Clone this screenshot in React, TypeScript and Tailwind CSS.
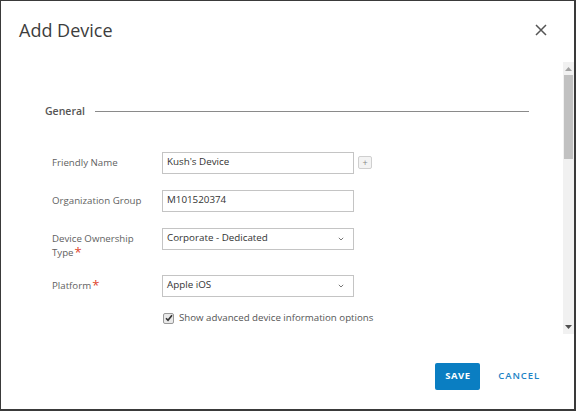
import React from 'react';

function Field({ label, required, children }: { label: React.ReactNode; required?: boolean; children: React.ReactNode }) {
  return (
    <div className="flex items-start">
      <div className="w-[110px] text-[9.7px] leading-[14px] text-[#5f5f5f] pt-[4px]">
        {label}
        {required && <span className="text-[#e0452b] text-[13px] leading-[10px] ml-[1px] align-[-1px]">*</span>}
      </div>
      {children}
    </div>
  );
}

function TextInput({ value }: { value: string }) {
  return (
    <div className="w-[192px] h-[22px] border border-[#c4c4c4] bg-white flex items-center px-[4px] text-[9.8px] text-[#333]">
      {value}
    </div>
  );
}

function Select({ value }: { value: string }) {
  return (
    <div className="w-[192px] h-[22px] border border-[#c4c4c4] bg-white flex items-center justify-between pl-[4px] pr-[9px] text-[9.8px] text-[#333]">
      <span>{value}</span>
      <svg width="6" height="4" viewBox="0 0 6 4">
        <path d="M0.8 0.8 L3 3 L5.2 0.8" fill="none" stroke="#777" strokeWidth="1" />
      </svg>
    </div>
  );
}

export default function App() {
  return (
    <div
      className="w-[576px] h-[411px] bg-white border-l border-t border-r-2 border-b-2 border-[#3a3a3a] flex flex-col overflow-hidden"
      style={{ fontFamily: '"Open Sans", "Liberation Sans", sans-serif' }}
    >
      <div className="h-[63px] flex items-center justify-between pl-[18px] pr-[27px] shrink-0">
        <h1 className="text-[18px] text-[#3d3d3d] font-normal mt-[-5px]">Add Device</h1>
        <svg width="12" height="12" viewBox="0 0 12 12" className="mt-[-5px]">
          <path d="M1 1 L11 11 M11 1 L1 11" stroke="#555" strokeWidth="1.5" />
        </svg>
      </div>

      <div className="h-[270px] flex shrink-0">
        <div className="flex-1 pl-[44px] pr-[34px] pt-[40px]">
          <div className="flex items-center gap-[10px]">
            <span className="text-[10.5px] font-semibold text-[#555]">General</span>
            <div className="flex-1 h-px bg-[#8a8a8a]" />
          </div>

          <div className="pl-[7px] pt-[32px] flex flex-col gap-[16px]">
            <Field label="Friendly Name">
              <div className="flex items-center gap-[4px]">
                <TextInput value="Kush's Device" />
                <div className="w-[14px] h-[13px] border border-[#cfcfcf] rounded-[2px] bg-[#f3f3f3] flex items-center justify-center text-[9px] leading-none text-[#888]">+</div>
              </div>
            </Field>
            <Field label="Organization Group">
              <TextInput value="M101520374" />
            </Field>
            <Field label={<>Device Ownership<br />Type</>} required>
              <Select value="Corporate - Dedicated" />
            </Field>
            <div className="flex flex-col gap-[14px] mt-[-1px]">
              <Field label="Platform" required>
                <Select value="Apple iOS" />
              </Field>
              <div className="pl-[111px] flex items-center gap-[5px]">
                <div className="w-[11px] h-[11px] border border-[#999] rounded-[2px] bg-[#e9e9e9] flex items-center justify-center">
                  <svg width="8" height="8" viewBox="0 0 8 8">
                    <path d="M1 4.2 L3 6.3 L7 1.2" fill="none" stroke="#333" strokeWidth="1.6" />
                  </svg>
                </div>
                <span className="text-[9.7px] text-[#555]">Show advanced device information options</span>
              </div>
            </div>
          </div>
        </div>

        <div className="w-[11px] bg-[#f1f1f1] flex flex-col items-center mt-[-2px]">
          <svg width="7" height="4" viewBox="0 0 7 4" className="mt-[5px]">
            <path d="M3.5 0 L7 4 L0 4 Z" fill="#a3a3a3" />
          </svg>
          <div className="w-[9px] h-[84px] bg-[#c1c1c1] mt-[4px]" />
          <div className="flex-1" />
          <svg width="7" height="4" viewBox="0 0 7 4" className="mb-[5px]">
            <path d="M0 0 L7 0 L3.5 4 Z" fill="#505050" />
          </svg>
        </div>
      </div>

      <div className="flex-1 flex items-start justify-end pr-[34px] pt-[29px] gap-[18px]">
        <button className="w-[45px] h-[27px] bg-[#0a7ec2] rounded-[2px] text-white text-[9.5px] font-bold tracking-[0.5px]">SAVE</button>
        <button className="h-[27px] text-[#1d83c5] text-[9.5px] font-semibold tracking-[0.9px]">CANCEL</button>
      </div>
    </div>
  );
}
